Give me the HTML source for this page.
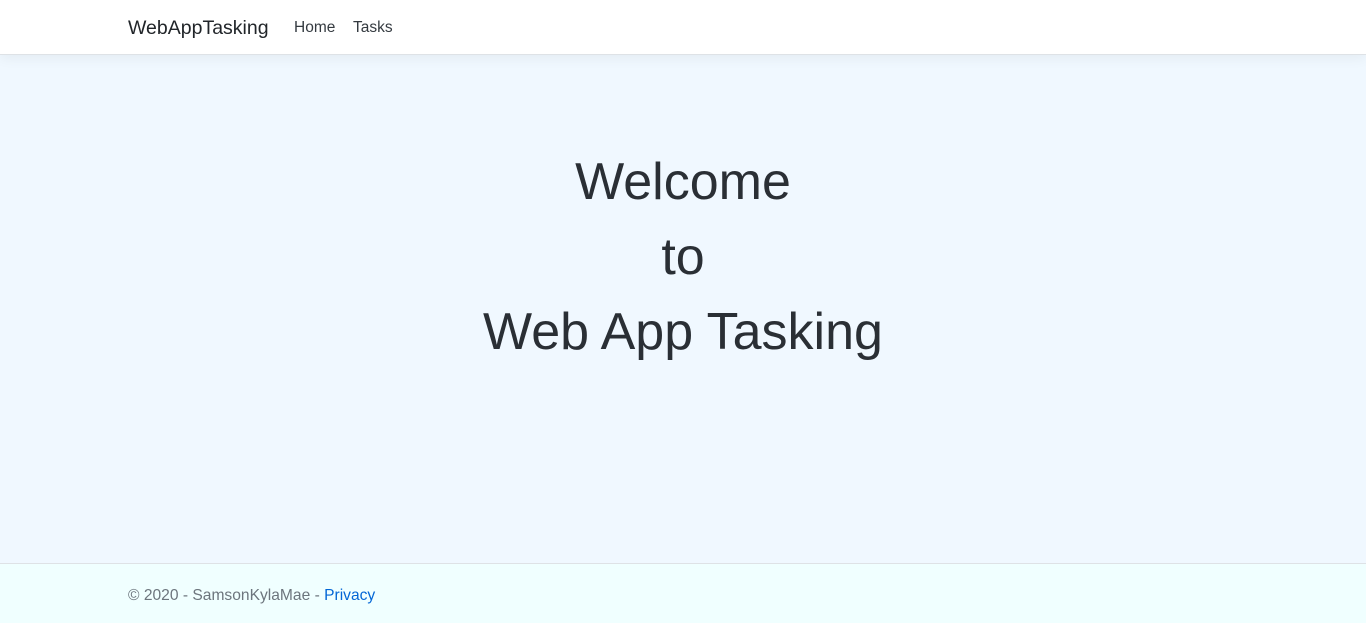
<!DOCTYPE html>
<html><head><style>
body{margin:0;font-family:"Liberation Sans",sans-serif;width:1366px;height:622px;overflow:hidden;background:#f0f8ff;position:relative}
nav{position:absolute;top:0;left:0;width:1366px;height:54px;background:#fff;border-bottom:1px solid #dee2e6;box-shadow:0 .25rem .75rem rgba(0,0,0,.05)}
.brand{position:absolute;left:128px;top:17px;font-size:19.5px;color:#212529}
.nl{position:absolute;top:19px;font-size:15.5px;color:#343a40}
h1{position:absolute;top:145px;left:0;width:1366px;margin:0;text-align:center;font-weight:300;font-size:52px;line-height:75px;color:#2a2f35}
footer{position:absolute;top:563px;left:0;width:1366px;height:59px;background:#f0ffff;border-top:1px solid #dee2e6;color:#6c757d;font-size:15.6px}
footer span{position:absolute;left:128px;top:23px}
a{color:#0366d6;text-decoration:none}
</style></head><body>
<nav><div class="brand">WebAppTasking</div><div class="nl" style="left:294px">Home</div><div class="nl" style="left:353px">Tasks</div></nav>
<h1>Welcome<br>to<br>Web App Tasking</h1>
<footer><span>© 2020 - SamsonKylaMae - <a>Privacy</a></span></footer>
</body></html>
